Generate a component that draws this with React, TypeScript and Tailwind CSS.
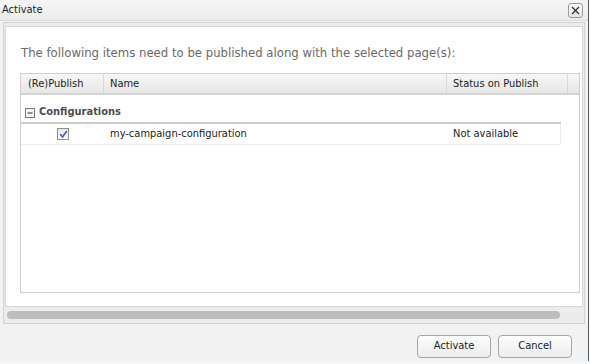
const FONT = "font-['DejaVu_Sans_Condensed','DejaVu_Sans',sans-serif]"

function CloseButton() {
  return (
    <div className="w-[15px] h-[15px] rounded-[3px] border border-[#9a9a9a] bg-gradient-to-b from-[#fdfdfd] to-[#e4e4e4] flex items-center justify-center">
      <svg width="9" height="9" viewBox="0 0 9 9" fill="none" stroke="#333" strokeWidth="1.3">
        <line x1="1" y1="1" x2="8" y2="8" />
        <line x1="8" y1="1" x2="1" y2="8" />
      </svg>
    </div>
  )
}

function Checkbox() {
  return (
    <div className="w-[12px] h-[12px] border border-[#8f8f8f] bg-gradient-to-b from-[#e8e8e8] to-[#fafafa] flex items-center justify-center">
      <svg width="9" height="9" viewBox="0 0 9 9" fill="none" stroke="#3a5fb4" strokeWidth="1.5" strokeLinecap="round">
        <polyline points="1.5 4.5 3.5 7 7.5 1.5" />
      </svg>
    </div>
  )
}

export default function App() {
  return (
    <div className={`w-[590px] h-[364px] bg-[#f4f8fb] overflow-hidden ${FONT}`}>
      <div className="w-[589px] h-[361px] bg-[#f2f2f2] border-r border-[#5a5a5a] flex flex-col">
        {/* title bar */}
        <div className="h-[21px] flex items-center justify-between pl-[2px] pr-[5px] pt-[1px] bg-gradient-to-b from-[#f6f6f6] to-[#ebebeb] border-b border-[#dcdcdc]">
          <span className="text-[11px] text-[#1e1e1e]">Activate</span>
          <CloseButton />
        </div>

        {/* body frame */}
        <div className="ml-[3px] mt-[1px] w-[582px] border border-[#d2d2d2] bg-[#ececec] px-[1px] pt-[3px] flex flex-col">
          <div className="h-[281px] border border-[#d6d6d6] bg-white flex flex-col overflow-hidden">
            <p className="pl-[15px] pt-[19px] text-[13px] text-[#6a6a6a] leading-[14px]">
              The following items need to be published along with the selected page(s):
            </p>

            {/* grid */}
            <div className="ml-[14px] mt-[13px] w-[560px] h-[220px] border border-[#cfcfcf] flex flex-col">
              <div className="h-[21px] flex text-[11px] text-[#222] bg-gradient-to-b from-[#f7f7f7] to-[#e6e6e6] border-b-2 border-[#d3d3d3]">
                <div className="w-[83px] pl-[7px] pt-[2px] flex items-center border-r border-[#d8d8d8]">(Re)Publish</div>
                <div className="w-[343px] pl-[6px] pt-[2px] flex items-center border-r border-[#d8d8d8]">Name</div>
                <div className="w-[121px] pl-[6px] pt-[2px] flex items-center border-r border-[#d8d8d8]">Status on Publish</div>
                <div className="flex-1" />
              </div>

              <div className="w-[540px]">
                <div className="h-[29px] flex items-end pb-[3px] pl-[4px] border-b-2 border-[#cdcdcd]">
                  <svg width="10" height="10" viewBox="0 0 10 10" className="mb-[1px]">
                    <rect x="0.5" y="0.5" width="9" height="9" fill="#f6f6f6" stroke="#777" />
                    <line x1="2.5" y1="5" x2="7.5" y2="5" stroke="#333" />
                  </svg>
                  <span className="ml-[4px] text-[11px] font-bold text-[#4e4e4e] leading-[14px]">Configurations</span>
                </div>
                <div className="h-[21px] flex items-center text-[11px] text-[#222] border-b border-r border-[#ececec]">
                  <div className="w-[83px] flex justify-center pl-[1px]">
                    <Checkbox />
                  </div>
                  <div className="w-[343px] pl-[6px]">my-campaign-configuration</div>
                  <div className="pl-[6px]">Not available</div>
                </div>
              </div>
            </div>
          </div>

          {/* horizontal scrollbar */}
          <div className="h-[16px] flex items-center pl-[2px]">
            <div className="w-[553px] h-[8px] rounded-full bg-[#bdbdbd]" />
          </div>
        </div>

        {/* footer */}
        <div className="flex-1 flex items-start justify-end gap-[7px] pt-[11px] pr-[16px]">
          <button className="w-[74px] h-[23px] rounded-[4px] border border-[#a6a6a6] bg-gradient-to-b from-[#fefefe] to-[#ececec] text-[11px] text-[#222]">
            Activate
          </button>
          <button className="w-[74px] h-[23px] rounded-[4px] border border-[#a6a6a6] bg-gradient-to-b from-[#fefefe] to-[#ececec] text-[11px] text-[#222]">
            Cancel
          </button>
        </div>
      </div>
    </div>
  )
}
